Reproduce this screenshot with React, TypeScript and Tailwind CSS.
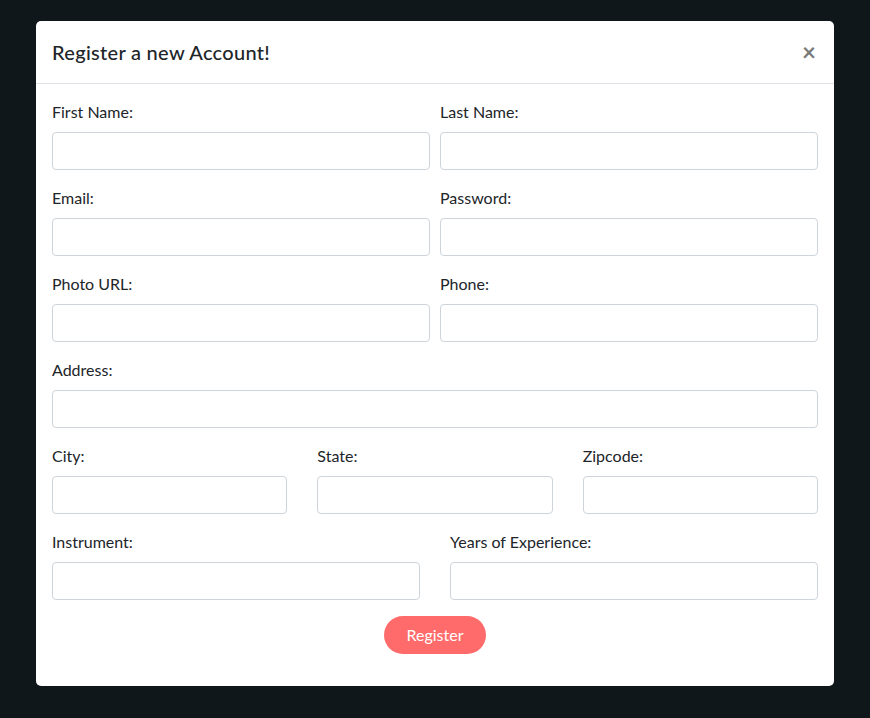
import React from 'react';

function Field({ label, className = '' }: { label: string; className?: string }) {
  return (
    <div className={`mb-4 flex flex-col ${className}`}>
      <label className="mb-2 text-[16px] leading-6 text-[#212529]">{label}</label>
      <input
        type="text"
        className="h-[38px] w-full rounded-[4px] border border-[#ced4da] bg-white px-3 text-[16px] outline-none"
      />
    </div>
  );
}

export default function App() {
  return (
    <div
      className="min-h-[718px] w-full bg-[#10171a] px-[36px] pt-[21px]"
      style={{ fontFamily: 'Lato, "Noto Sans", sans-serif' }}
    >
      <div className="h-[665px] w-[798px] rounded-[5px] bg-white">
        <div className="flex h-[63px] items-center justify-between border-b border-[#dee2e6] px-4">
          <h5 className="text-[20px] leading-[30px] font-medium tracking-[0.3px] text-[#212529]">
            Register a new Account!
          </h5>
          <button type="button" className="mr-[2px] text-[24px] leading-none font-bold text-[#7a7a7a]">
            ×
          </button>
        </div>
        <div className="px-4 pt-4">
          <div className="grid grid-cols-2 gap-x-[10px]">
            <Field label="First Name:" />
            <Field label="Last Name:" />
            <Field label="Email:" />
            <Field label="Password:" />
            <Field label="Photo URL:" />
            <Field label="Phone:" />
          </div>
          <Field label="Address:" />
          <div className="grid grid-cols-3 gap-x-[30px]">
            <Field label="City:" />
            <Field label="State:" />
            <Field label="Zipcode:" />
          </div>
          <div className="grid grid-cols-2 gap-x-[30px]">
            <Field label="Instrument:" />
            <Field label="Years of Experience:" />
          </div>
          <div className="flex justify-center">
            <button
              type="button"
              className="h-[38px] w-[102px] rounded-full bg-[#ff6b6b] text-[16px] text-white"
            >
              Register
            </button>
          </div>
        </div>
      </div>
    </div>
  );
}
